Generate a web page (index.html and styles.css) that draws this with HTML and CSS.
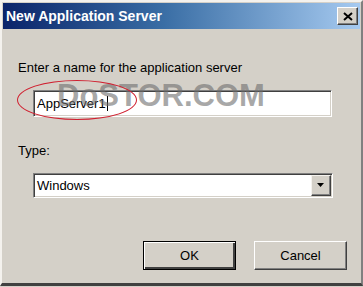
FILE: index.html
```html
<!DOCTYPE html>
<html>
<head>
    <title>New Application Server</title>
    <link rel="stylesheet" href="styles.css">
</head>
<body>
    <div class="window">
        <div class="titlebar">
            <span class="title">New Application Server</span>
            <button class="close">
                <svg width="10" height="9" viewBox="0 0 10 9"><path d="M1 1 L9 8 M9 1 L1 8" stroke="#000" stroke-width="2"/></svg>
            </button>
        </div>

        <div class="content">
            <div class="label">Enter a name for the application server</div>
            <div class="field">
                <span class="value">AppServer1</span><span class="caret"></span>
            </div>

            <div class="label type-label">Type:</div>
            <div class="combo">
                <span class="value">Windows</span>
                <span class="arrow">
                    <svg width="8" height="5" viewBox="0 0 8 5"><path d="M0 0 H7 L3.5 4 Z" fill="#000"/></svg>
                </span>
            </div>

            <div class="buttons">
                <button class="btn default">OK</button>
                <button class="btn">Cancel</button>
            </div>
        </div>

        <!-- annotation overlays from the original screenshot -->
        <div class="watermark">DoSTOR.COM</div>
        <div class="circle"></div>
    </div>
</body>
</html>
```

FILE: styles.css
```css
body { margin: 0; font-family: "Liberation Sans", Arial, sans-serif; background: #d4d0c8; }
.window { position: relative; width: 363px; height: 286px; box-sizing: border-box; background: #d4d0c8;
    border-top: 2px solid #f4f2ee; border-left: 2px solid #f4f2ee; border-right: 2px solid #808080; border-bottom: 3px solid #404040;
    padding: 1px 1px 0 1px; }
.titlebar { height: 26px; display: flex; align-items: center; justify-content: space-between;
    background: linear-gradient(to right, #0a246a 0%, #3a6ea5 45%, #a6caf0 100%); padding: 0 2px 0 3px; }
.title { color: #fff; font-weight: bold; font-size: 14px; }
.close { width: 21px; height: 18px; padding: 0; margin: 0; background: #d4d0c8; display: flex; align-items: center; justify-content: center;
    border: 1px solid; border-color: #fff #404040 #404040 #fff; box-shadow: inset -1px -1px #808080; }
.content { padding: 31px 0 0 15px; }
.label { font-size: 13px; line-height: 15px; color: #000; }
.type-label { margin-top: 26px; }
.field, .combo { margin: 15px 0 0 15px; box-sizing: border-box; background: #fff; display: flex; align-items: center;
    border: 1px solid; border-color: #808080 #fff #fff #808080; box-shadow: inset 1px 1px #404040, inset -1px -1px #d4d0c8; }
.field { width: 299px; height: 27px; padding-left: 3px; }
.combo { width: 300px; height: 25px; padding-left: 3px; justify-content: space-between; }
.value { font-size: 13px; color: #000; }
.caret { display: inline-block; width: 1px; height: 15px; background: #000; margin-left: 1px; }
.arrow { width: 20px; height: 21px; margin-right: 1px; box-sizing: border-box; background: #d4d0c8; display: flex; align-items: center; justify-content: center;
    border: 1px solid; border-color: #f4f2ee #404040 #404040 #f4f2ee; box-shadow: inset -1px -1px #808080; }
.buttons { display: flex; gap: 18px; justify-content: flex-end; margin: 43px 13px 0 0; }
.btn { width: 93px; height: 29px; font-family: "Liberation Sans", Arial, sans-serif; font-size: 13px; color: #000; background: #d4d0c8; cursor: pointer;
    border: 1px solid; border-color: #fff #404040 #404040 #fff; box-shadow: inset -1px -1px #808080; }
.btn.default { border: 1px solid #000; box-shadow: inset 1px 1px #fff, inset -2px -2px #404040; }
.watermark { position: absolute; left: 55px; top: 76px; font-family: "Liberation Sans", Arial, sans-serif; font-weight: bold; font-size: 31px;
    color: rgba(110, 110, 110, 0.6); pointer-events: none; }
.circle { position: absolute; left: 15px; top: 78px; width: 118px; height: 38px; border: 1px solid #d02030; border-radius: 50%; pointer-events: none; }
```
